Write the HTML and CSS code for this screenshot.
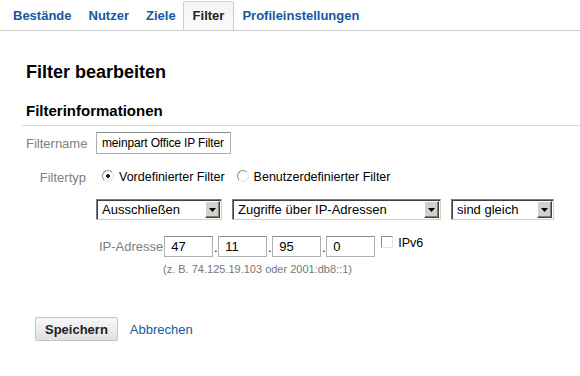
FILE: index.html
```html
<!DOCTYPE html>
<html lang="de">
<head>
    <meta charset="UTF-8">
    <title>Filter bearbeiten</title>
    <link rel="stylesheet" href="styles.css">
</head>
<body>

    <nav class="tabs">
        <a class="tab" href="#">Bestände</a>
        <a class="tab" href="#">Nutzer</a>
        <a class="tab" href="#">Ziele</a>
        <a class="tab tab-active" href="#">Filter</a>
        <a class="tab" href="#">Profileinstellungen</a>
    </nav>

    <div class="content">
        <h2 class="page-title">Filter bearbeiten</h2>
        <h3 class="section-title">Filterinformationen</h3>

        <div class="form-row name-row">
            <label class="form-label" for="filterName">Filtername</label>
            <input class="text-input name-input" id="filterName" type="text" value="meinpart Office IP Filter">
        </div>

        <div class="form-row type-row">
            <span class="form-label">Filtertyp</span>
            <label class="radio-option"><input type="radio" name="filterType" checked>Vordefinierter Filter</label>
            <label class="radio-option"><input type="radio" name="filterType">Benutzerdefinierter Filter</label>
        </div>

        <div class="select-row">
            <div class="select-box select-action">
                <select>
                    <option>Ausschließen</option>
                    <option>Einschließen</option>
                </select>
                <span class="select-arrow"><svg width="7" height="4" viewBox="0 0 7 4"><path d="M0 0h7L3.5 4z" fill="#000"/></svg></span>
            </div>
            <div class="select-box select-source">
                <select>
                    <option>Zugriffe über IP-Adressen</option>
                </select>
                <span class="select-arrow"><svg width="7" height="4" viewBox="0 0 7 4"><path d="M0 0h7L3.5 4z" fill="#000"/></svg></span>
            </div>
            <div class="select-box select-match">
                <select>
                    <option>sind gleich</option>
                </select>
                <span class="select-arrow"><svg width="7" height="4" viewBox="0 0 7 4"><path d="M0 0h7L3.5 4z" fill="#000"/></svg></span>
            </div>
        </div>

        <div class="ip-row">
            <label class="ip-label" for="ip1">IP-Adresse</label>
            <input class="text-input ip-input" id="ip1" type="text" value="47">
            <span class="ip-dot">.</span>
            <input class="text-input ip-input" type="text" value="11">
            <span class="ip-dot">.</span>
            <input class="text-input ip-input" type="text" value="95">
            <span class="ip-dot">.</span>
            <input class="text-input ip-input" type="text" value="0">
            <label class="check-option"><input type="checkbox">IPv6</label>
        </div>
        <p class="hint">(z. B. 74.125.19.103 oder 2001:db8::1)</p>

        <div class="actions">
            <button class="save-button">Speichern</button>
            <a class="cancel-link" href="#">Abbrechen</a>
        </div>
    </div>

</body>
</html>
```

FILE: styles.css
```css
body {
    margin: 0;
    font-family: "Liberation Sans", Arial, sans-serif;
    font-size: 13px;
    color: #000;
    background: #fff;
}

/* tabs */
.tabs {
    display: flex;
    height: 29px;
    padding: 1px 0 0 4.5px;
    border-bottom: 1px solid #cccccc;
}

.tab {
    display: block;
    padding: 0 7.5px;
    line-height: 28px;
    border: 1px solid transparent;
    border-bottom: none;
    font-weight: bold;
    color: #15589e;
    text-decoration: none;
}

.tab-active {
    padding: 0 8.5px;
    margin-left: -1px;
    color: #222;
    border-color: #cccccc;
    border-radius: 2px 2px 0 0;
    background: linear-gradient(#f4f4f4, #fafafa);
}

/* content */
.content {
    padding-left: 26px;
}

.page-title {
    margin: 31px 0 0;
    font-size: 18px;
    line-height: 21px;
}

.section-title {
    margin: 19px 0 0 -4px;
    padding: 0 0 6px 4px;
    font-size: 15px;
    line-height: 17px;
    border-bottom: 1px solid #d9d9d9;
}

.form-row {
    display: flex;
    align-items: center;
}

.form-label {
    width: 60px;
    margin-right: 10px;
    text-align: right;
    color: #808080;
}

.name-row {
    margin-top: 6px;
}

.text-input {
    box-sizing: border-box;
    height: 22px;
    padding: 0 6px;
    border: 1px solid #b0b0b0;
    border-top-color: #8c8c8c;
    font-family: "Liberation Sans", Arial, sans-serif;
    font-size: 13px;
    color: #000;
    outline: none;
}

.name-input {
    width: 135px;
    padding: 0 5px;
    font-size: 12px;
    letter-spacing: -0.15px;
}

.type-row {
    margin-top: 12px;
    height: 22px;
}

.radio-option {
    display: flex;
    align-items: center;
    margin-left: 6px;
    margin-right: 6px;
    font-size: 12.5px;
}

.radio-option input,
.check-option input {
    appearance: none;
    -webkit-appearance: none;
    box-sizing: border-box;
    width: 12px;
    height: 12px;
    margin: -3px 5px 0 0;
    border: 1px solid;
    border-color: #8a8a8a #e4e4e4 #e4e4e4 #8a8a8a;
    background: #fff;
}

.radio-option input {
    border-radius: 50%;
}

.radio-option input:checked {
    background: radial-gradient(circle, #222 0 1.6px, #fff 2.2px);
}

/* selects in the old windows look */
.select-row {
    display: flex;
    gap: 10px;
    margin: 11px 0 0 70px;
}

.select-box {
    box-sizing: border-box;
    display: flex;
    align-items: center;
    height: 21px;
    padding: 0 1px 0 2px;
    border: 1px solid;
    border-color: #7a7a7a #d4d0c8 #d4d0c8 #7a7a7a;
    box-shadow: inset 1px 1px #404040;
    background: #fff;
}

.select-box select {
    flex: 1;
    min-width: 0;
    height: 17px;
    padding: 0 0 0 3px;
    border: none;
    appearance: none;
    -webkit-appearance: none;
    background: transparent;
    font-family: "Liberation Sans", Arial, sans-serif;
    font-size: 13px;
    color: #000;
    outline: none;
}

.select-arrow {
    box-sizing: border-box;
    display: flex;
    align-items: center;
    justify-content: center;
    width: 15px;
    height: 17px;
    border: 1px solid;
    border-color: #fff #404040 #404040 #fff;
    box-shadow: inset -1px -1px #808080;
    background: #d4d0c8;
}

.select-action {
    width: 126px;
}

.select-source {
    width: 209px;
}

.select-match {
    width: 103px;
}

/* ip address */
.ip-row {
    display: flex;
    align-items: center;
    margin: 16px 0 0 73px;
    height: 21px;
}

.ip-label {
    margin-right: 1px;
    color: #808080;
}

.ip-input {
    width: 49px;
    height: 21px;
}

.ip-dot {
    width: 5px;
    text-align: center;
    align-self: flex-end;
    line-height: 18px;
}

.check-option {
    display: flex;
    align-items: flex-start;
    align-self: flex-start;
    margin-left: 6px;
    font-size: 12.5px;
    line-height: 14px;
}

.check-option input {
    margin: 0 5px 0 0;
}

.hint {
    margin: 5px 0 0 137px;
    font-size: 11px;
    line-height: 14px;
    color: #777;
}

/* buttons */
.actions {
    display: flex;
    align-items: center;
    margin: 41px 0 0 9px;
}

.save-button {
    height: 24px;
    padding: 0 9px;
    border: 1px solid #c4c4c4;
    border-radius: 2px;
    background: linear-gradient(#f8f8f8, #e0e0e0);
    font-family: "Liberation Sans", Arial, sans-serif;
    font-size: 13px;
    font-weight: bold;
    color: #222;
}

.cancel-link {
    margin-left: 12px;
    color: #15589e;
    text-decoration: none;
}
```
